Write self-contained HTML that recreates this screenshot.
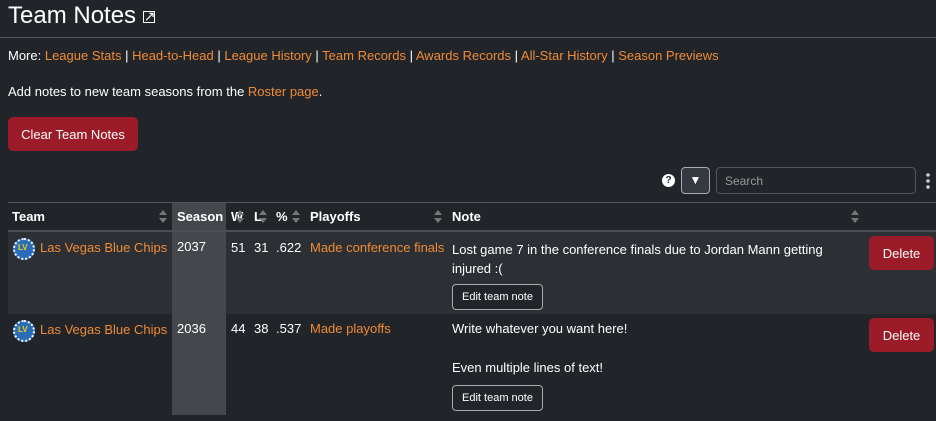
<!DOCTYPE html>
<html><head><style>
*{box-sizing:border-box;margin:0;padding:0}
body{width:936px;height:421px;overflow:hidden;background:#212529;color:#fff;font-family:"Liberation Sans",sans-serif;font-size:13px;position:relative}
a{color:#f08a35;text-decoration:none}
.abs{position:absolute;white-space:nowrap}
.btn{position:absolute;background:#9b1c28;color:#fff;border-radius:5px;display:flex;align-items:center;justify-content:center;font-size:13px}
.sm{position:absolute;border:1px solid #aaa;border-radius:4px;color:#fff;font-size:11px;display:flex;align-items:center;justify-content:center;background:#212529}
.sort{position:absolute;width:8px;height:13px}
.sort:before,.sort:after{content:"";position:absolute;left:0;border-left:4px solid transparent;border-right:4px solid transparent}
.sort:before{top:0;border-bottom:5px solid #777}
.sort:after{bottom:0;border-top:5px solid #777}
.logo{position:absolute;width:22px;height:22px;border-radius:50%;background:#2b6cb8;border:2px dotted #fff}
.logo span{position:absolute;left:3px;top:3px;font-size:8px;color:#f5d000;font-weight:bold}
</style></head><body>
<div class="abs" style="left:8px;top:2px;font-size:24px">Team Notes <span style="font-size:14px;display:inline-block;border:1.5px solid #fff;width:12px;height:12px;vertical-align:middle;line-height:8px;text-align:center">↗</span></div>
<div class="abs" style="left:0;top:37px;width:936px;height:1px;background:#555"></div>
<div class="abs" style="left:8px;top:48px">More: <a>League Stats</a> | <a>Head-to-Head</a> | <a>League History</a> | <a>Team Records</a> | <a>Awards Records</a> | <a>All-Star History</a> | <a>Season Previews</a></div>
<div class="abs" style="left:8px;top:84px">Add notes to new team seasons from the <a>Roster page</a>.</div>
<div class="btn" style="left:8px;top:117px;width:130px;height:34px">Clear Team Notes</div>
<div class="abs" style="left:662px;top:174px;width:13px;height:13px;border-radius:50%;background:#fff;color:#212529;font-size:10px;font-weight:bold;text-align:center;line-height:13px">?</div>
<div class="abs" style="left:681px;top:167px;width:29px;height:27px;border:1px solid #aaa;border-radius:4px;background:#343a40;color:#fff;text-align:center;line-height:25px;font-size:12px">▼</div>
<div class="abs" style="left:716px;top:167px;width:200px;height:27px;border:1px solid #555;border-radius:4px;color:#999;padding:6px 8px;font-size:12px">Search</div>
<div class="abs" style="left:926px;top:172px;width:4px;height:17px;background:radial-gradient(circle,#ccc 1.6px,transparent 2px) 0 0/4px 6px"></div>
<div class="abs" style="left:8px;top:202px;width:928px;height:1px;background:#555"></div>
<div class="abs" style="left:172px;top:203px;width:54px;height:212px;background:#44484d"></div>
<div class="abs" style="left:8px;top:231px;width:164px;height:83px;background:#2c3034"></div>
<div class="abs" style="left:226px;top:231px;width:710px;height:83px;background:#2c3034"></div>
<div class="abs" style="left:8px;top:230px;width:928px;height:2px;background:#4a4f55"></div>
<div class="abs" style="left:12px;top:209px;font-weight:bold">Team</div><div class="sort" style="left:159px;top:210px"></div>
<div class="abs" style="left:177px;top:209px;font-weight:bold">Season</div>
<div class="abs" style="left:231px;top:209px;font-weight:bold">W</div><div class="sort" style="left:236px;top:210px"></div>
<div class="abs" style="left:254px;top:209px;font-weight:bold">L</div><div class="sort" style="left:259px;top:210px"></div>
<div class="abs" style="left:276px;top:209px;font-weight:bold">%</div><div class="sort" style="left:292px;top:210px"></div>
<div class="abs" style="left:310px;top:209px;font-weight:bold">Playoffs</div><div class="sort" style="left:434px;top:210px"></div>
<div class="abs" style="left:452px;top:209px;font-weight:bold">Note</div><div class="sort" style="left:851px;top:210px"></div>

<div class="logo" style="left:13px;top:238px"><span>LV</span></div>
<div class="abs" style="left:40px;top:240px"><a>Las Vegas Blue Chips</a></div>
<div class="abs" style="left:177px;top:239px">2037</div>
<div class="abs" style="left:231px;top:240px">51</div><div class="abs" style="left:254px;top:240px">31</div><div class="abs" style="left:276px;top:240px">.622</div>
<div class="abs" style="left:310px;top:240px"><a>Made conference finals</a></div>
<div class="abs" style="left:452px;top:240px;line-height:19px">Lost game 7 in the conference finals due to Jordan Mann getting<br>injured :(</div>
<div class="sm" style="left:452px;top:284px;width:91px;height:26px">Edit team note</div>
<div class="btn" style="left:869px;top:236px;width:65px;height:34px">Delete</div>

<div class="logo" style="left:13px;top:320px"><span>LV</span></div>
<div class="abs" style="left:40px;top:322px"><a>Las Vegas Blue Chips</a></div>
<div class="abs" style="left:177px;top:321px">2036</div>
<div class="abs" style="left:231px;top:321px">44</div><div class="abs" style="left:254px;top:321px">38</div><div class="abs" style="left:276px;top:321px">.537</div>
<div class="abs" style="left:310px;top:321px"><a>Made playoffs</a></div>
<div class="abs" style="left:452px;top:321px">Write whatever you want here!</div>
<div class="abs" style="left:452px;top:360px">Even multiple lines of text!</div>
<div class="sm" style="left:452px;top:385px;width:91px;height:26px">Edit team note</div>
<div class="btn" style="left:869px;top:318px;width:65px;height:34px">Delete</div>
</body></html>
